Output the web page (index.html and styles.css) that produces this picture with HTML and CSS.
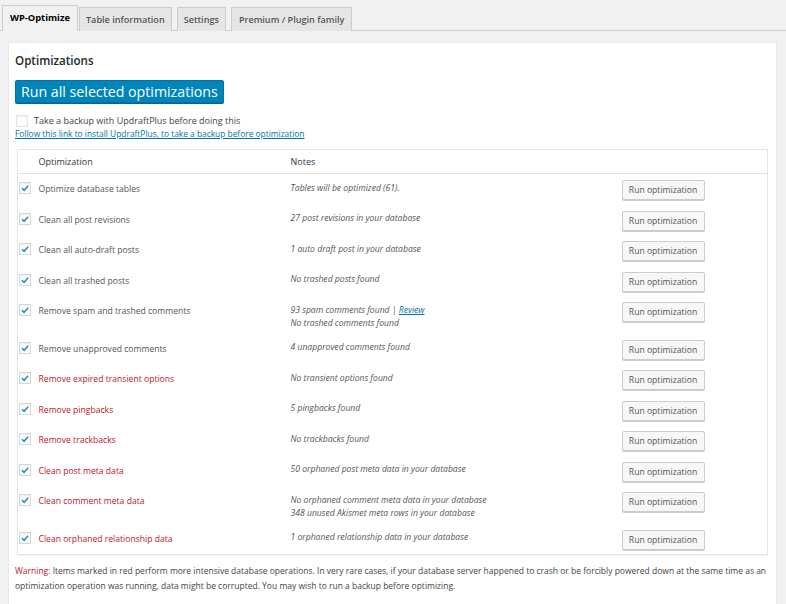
FILE: index.html
```html
<!DOCTYPE html>
<html>
<head>
<meta charset="utf-8">
<title>WP-Optimize</title>
<link rel="stylesheet" href="styles.css">
</head>
<body>
<nav class="tabs">
  <a class="tab active">WP-Optimize</a>
  <a class="tab">Table information</a>
  <a class="tab">Settings</a>
  <a class="tab">Premium / Plugin family</a>
</nav>
<div class="panel">
  <h3 class="title">Optimizations</h3>
  <button class="primary">Run all selected optimizations</button>
  <div class="backup"><span class="box empty"></span><span>Take a backup with UpdraftPlus before doing this</span></div>
  <a class="link install">Follow this link to install UpdraftPlus, to take a backup before optimization</a>
  <table class="opts">
    <colgroup><col class="c1"><col class="c2"><col class="c3"><col class="c4"></colgroup>
    <thead>
      <tr><th></th><th>Optimization</th><th>Notes</th><th></th></tr>
    </thead>
    <tbody>
      <tr><td class="ck"><span class="box"><svg viewBox="0 0 12 12"><path d="M2.3 6.2 L4.9 8.8 L9.8 3.2" /></svg></span></td><td class="lbl">Optimize database tables</td><td class="note">Tables will be optimized (61).</td><td class="act"><button class="run">Run optimization</button></td></tr>
      <tr><td class="ck"><span class="box"><svg viewBox="0 0 12 12"><path d="M2.3 6.2 L4.9 8.8 L9.8 3.2" /></svg></span></td><td class="lbl">Clean all post revisions</td><td class="note">27 post revisions in your database</td><td class="act"><button class="run">Run optimization</button></td></tr>
      <tr><td class="ck"><span class="box"><svg viewBox="0 0 12 12"><path d="M2.3 6.2 L4.9 8.8 L9.8 3.2" /></svg></span></td><td class="lbl">Clean all auto-draft posts</td><td class="note">1 auto draft post in your database</td><td class="act"><button class="run">Run optimization</button></td></tr>
      <tr><td class="ck"><span class="box"><svg viewBox="0 0 12 12"><path d="M2.3 6.2 L4.9 8.8 L9.8 3.2" /></svg></span></td><td class="lbl">Clean all trashed posts</td><td class="note">No trashed posts found</td><td class="act"><button class="run">Run optimization</button></td></tr>
      <tr><td class="ck"><span class="box"><svg viewBox="0 0 12 12"><path d="M2.3 6.2 L4.9 8.8 L9.8 3.2" /></svg></span></td><td class="lbl">Remove spam and trashed comments</td><td class="note">93 spam comments found | <a class="link">Review</a><br>No trashed comments found</td><td class="act"><button class="run">Run optimization</button></td></tr>
      <tr><td class="ck"><span class="box"><svg viewBox="0 0 12 12"><path d="M2.3 6.2 L4.9 8.8 L9.8 3.2" /></svg></span></td><td class="lbl">Remove unapproved comments</td><td class="note">4 unapproved comments found</td><td class="act"><button class="run">Run optimization</button></td></tr>
      <tr><td class="ck"><span class="box"><svg viewBox="0 0 12 12"><path d="M2.3 6.2 L4.9 8.8 L9.8 3.2" /></svg></span></td><td class="lbl hot">Remove expired transient options</td><td class="note">No transient options found</td><td class="act"><button class="run">Run optimization</button></td></tr>
      <tr><td class="ck"><span class="box"><svg viewBox="0 0 12 12"><path d="M2.3 6.2 L4.9 8.8 L9.8 3.2" /></svg></span></td><td class="lbl hot">Remove pingbacks</td><td class="note">5 pingbacks found</td><td class="act"><button class="run">Run optimization</button></td></tr>
      <tr><td class="ck"><span class="box"><svg viewBox="0 0 12 12"><path d="M2.3 6.2 L4.9 8.8 L9.8 3.2" /></svg></span></td><td class="lbl hot">Remove trackbacks</td><td class="note">No trackbacks found</td><td class="act"><button class="run">Run optimization</button></td></tr>
      <tr><td class="ck"><span class="box"><svg viewBox="0 0 12 12"><path d="M2.3 6.2 L4.9 8.8 L9.8 3.2" /></svg></span></td><td class="lbl hot">Clean post meta data</td><td class="note">50 orphaned post meta data in your database</td><td class="act"><button class="run">Run optimization</button></td></tr>
      <tr><td class="ck"><span class="box"><svg viewBox="0 0 12 12"><path d="M2.3 6.2 L4.9 8.8 L9.8 3.2" /></svg></span></td><td class="lbl hot">Clean comment meta data</td><td class="note">No orphaned comment meta data in your database<br>348 unused Akismet meta rows in your database</td><td class="act"><button class="run">Run optimization</button></td></tr>
      <tr><td class="ck"><span class="box"><svg viewBox="0 0 12 12"><path d="M2.3 6.2 L4.9 8.8 L9.8 3.2" /></svg></span></td><td class="lbl hot">Clean orphaned relationship data</td><td class="note">1 orphaned relationship data in your database</td><td class="act"><button class="run">Run optimization</button></td></tr>
    </tbody>
  </table>
  <p class="warning"><span class="hot">Warning:</span> Items marked in red perform more intensive database operations. In very rare cases, if your database server happened to crash or be forcibly powered down at the same time as an optimization operation was running, data might be corrupted. You may wish to run a backup before optimizing.</p>
</div>
</body>
</html>
```

FILE: styles.css
```css
html, body {
  margin: 0;
  padding: 0;
  background: #f1f1f1;
  font-family: "Open Sans", "Noto Sans", sans-serif;
  color: #444;
  font-size: 9px;
}

.tabs {
  display: flex;
  align-items: flex-end;
  height: 30px;
  padding-left: 2px;
  border-bottom: 1px solid #ccc;
}

.tab {
  display: block;
  height: 23px;
  line-height: 23px;
  padding: 0 6px;
  margin-right: 5px;
  margin-bottom: -1px;
  background: #e5e5e5;
  border: 1px solid #ccc;
  border-bottom: none;
  font-weight: 600;
  font-size: 9.1px;
  color: #555;
  box-sizing: content-box;
}

.tab:last-child { padding: 0 7px; }

.tab.active {
  background: #f1f1f1;
  color: #000;
  height: 24px;
  margin-right: 1px;
  padding: 0 7px;
  font-weight: 700;
  font-size: 9.3px;
  border-bottom: 1px solid #f1f1f1;
}

.panel {
  margin: 11px 9px 0 8px;
  padding: 0 9px 30px 6px;
  background: #fff;
  border: 1px solid #e8e8e8;
  border-bottom: none;
  min-height: 540px;
}

.title {
  margin: 10px 0 0 0;
  font-size: 11.6px;
  line-height: 16px;
  font-weight: 600;
  color: #23282d;
}

.primary {
  display: block;
  margin-top: 11px;
  height: 23px;
  padding: 0 5px;
  background: #0085ba;
  border: 1px solid #0073aa;
  border-radius: 2px;
  color: #fff;
  font-family: "Open Sans", "Noto Sans", sans-serif;
  font-size: 14.2px;
  line-height: 20px;
  box-shadow: 0 1px 0 #006799;
}

.backup {
  display: flex;
  align-items: center;
  margin-top: 11px;
  line-height: 13px;
  color: #444;
}

.backup .box { margin: 0 6px 0 1px; border-color: #e2e4e6; }

.box {
  display: block;
  width: 10px;
  height: 10px;
  border: 1px solid #d4d6d8;
  background: #fff;
  box-shadow: inset 0 1px 2px rgba(0,0,0,.08);
}

.box svg {
  display: block;
  width: 10px;
  height: 10px;
}

.box path {
  fill: none;
  stroke: #1e8cbe;
  stroke-width: 1.8;
}

.link {
  color: #0073aa;
  text-decoration: underline;
}

.install {
  display: block;
  line-height: 13px;
  font-size: 8.4px;
}

.opts {
  margin: 9px 0 0 2px;
  width: 751px;
  border-collapse: collapse;
  table-layout: fixed;
  border: 1px solid #e5e5e5;
  box-shadow: 0 1px 1px rgba(0,0,0,.04);
}

.c1 { width: 21px; }
.c2 { width: 252px; }
.c3 { width: 331px; }

.opts th {
  height: 23px;
  padding: 0;
  text-align: left;
  font-weight: 400;
  color: #32373c;
  border-bottom: 1px solid #e1e1e1;
}

.opts td {
  vertical-align: top;
  padding: 0;
}

.opts td.ck { padding: 8px 0 0 1px; }

.opts td.lbl {
  padding-top: 5px;
  line-height: 20px;
  font-size: 8.6px;
  color: #555;
}

.opts td.lbl.hot, .hot { color: #c0161c; }

.opts td.note {
  padding: 7.5px 0 4px 0;
  line-height: 13px;
  font-style: italic;
  color: #555;
  font-size: 8.6px;
}

.opts td.act {
  padding: 6px 0 4.5px 0;
}

.run {
  display: block;
  height: 20px;
  width: 83px;
  padding: 0;
  background: #f7f7f7;
  border: 1px solid #ccc;
  border-radius: 2px;
  box-shadow: 0 1px 0 #ccc;
  color: #555;
  font-family: "Open Sans", "Noto Sans", sans-serif;
  font-size: 8.6px;
  line-height: 18px;
}

.warning {
  margin: 8px 0 0 0;
  line-height: 15px;
  font-size: 8.5px;
  color: #444;
}
```
